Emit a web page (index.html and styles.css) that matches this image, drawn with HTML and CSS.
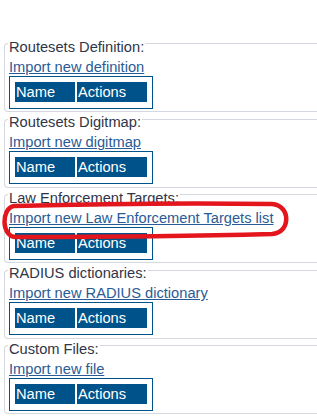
FILE: index.html
```html
<!DOCTYPE html>
<html lang="en">
<head>
<meta charset="UTF-8">
<title>Imports</title>
<meta name="viewport" content="width=device-width, initial-scale=1.0">
<link rel="stylesheet" href="styles.css">
</head>
<body>
 <fieldset class="box">
  <legend>Routesets Definition:</legend>
  <a href="#" class="imp">Import new definition</a>
  <table class="list"><tr><th class="c-name">Name</th><th class="c-act">Actions</th></tr></table>
 </fieldset>

 <fieldset class="box">
  <legend>Routesets Digitmap:</legend>
  <a href="#" class="imp">Import new digitmap</a>
  <table class="list"><tr><th class="c-name">Name</th><th class="c-act">Actions</th></tr></table>
 </fieldset>

 <fieldset class="box">
  <legend>Law Enforcement Targets:</legend>
  <a href="#" class="imp">Import new Law Enforcement Targets list</a>
  <table class="list"><tr><th class="c-name">Name</th><th class="c-act">Actions</th></tr></table>
 </fieldset>

 <fieldset class="box">
  <legend>RADIUS dictionaries:</legend>
  <a href="#" class="imp">Import new RADIUS dictionary</a>
  <table class="list"><tr><th class="c-name">Name</th><th class="c-act">Actions</th></tr></table>
 </fieldset>

 <fieldset class="box">
  <legend>Custom Files:</legend>
  <a href="#" class="imp">Import new file</a>
  <table class="list"><tr><th class="c-name">Name</th><th class="c-act">Actions</th></tr></table>
 </fieldset>

 <!-- red marker drawn over the screenshot -->
 <svg class="mark" width="292" height="42" viewBox="0 0 292 42">
  <path d="M14 6 C90 4 200 3 272 4 C291 5 291 33 272 34 C200 36 90 37 16 37 C1 37 1 8 14 6 Z" fill="none" stroke="#e3161d" stroke-width="4.5"/>
 </svg>
</body>
</html>
```

FILE: styles.css
```css
body{font-family:"Liberation Sans",Arial,Helvetica,sans-serif;font-size:11pt;background:#fff;margin:0;padding:36.5px 0 0 4px;position:relative}
.box{width:100%;margin:0;padding:8px 0 2.5px 4px;border:1px solid #d3d9df;border-right:0;border-radius:4px 0 0 4px;box-sizing:border-box;min-width:0}
.box legend{color:#2f3548;line-height:8px;padding:6px 1px 0 1px;margin-left:-1px}
.imp{display:block;width:max-content;line-height:17px;color:#2a5b96}
.list{border:1px solid #00538a;border-spacing:2px;padding:3px 3px 4px 3px}
.list th{background:#00538a;color:#fff;font-weight:normal;text-align:left;height:20px;padding:0 0 0 1px;box-sizing:border-box}
.c-name{width:60px}
.c-act{width:70px}
.mark{position:absolute;left:0;top:200px}
```
